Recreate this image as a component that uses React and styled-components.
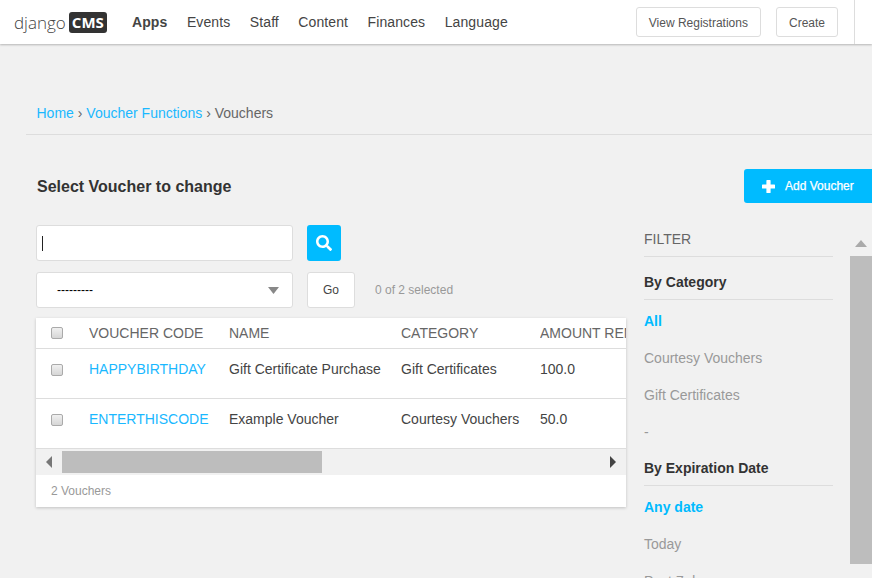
import React from 'react'
import styled, { createGlobalStyle } from 'styled-components'
import { FaSearch } from 'react-icons/fa'

const Global = createGlobalStyle`
  html, body {
    margin: 0;
    height: 100%;
    overflow: hidden;
    background: #f1f1f1;
  }
  body {
    font-family: "Liberation Sans", Arial, sans-serif;
    font-size: 14px;
    color: #333;
  }
  * { box-sizing: border-box; }
`

const Page = styled.div`
  width: 872px;
  height: 578px;
  overflow: hidden;
`

const TopBar = styled.header`
  height: 44px;
  background: #fff;
  box-shadow: 0 1px 2px rgba(0, 0, 0, 0.25);
  display: flex;
  align-items: center;
  padding-left: 14px;
  position: relative;
`

const Logo = styled.div`
  display: flex;
  align-items: center;
  width: 118px;
  font-family: "Open Sans", sans-serif;
  font-weight: 300;
  font-size: 17px;
  color: #444;
`

const LogoBox = styled.span`
  background: #333;
  color: #fff;
  border-radius: 3px;
  width: 38px;
  height: 21px;
  margin-left: 3px;
  display: flex;
  align-items: center;
  justify-content: center;
  font-family: "Open Sans", sans-serif;
  font-weight: 700;
  font-size: 15px;
`

const Nav = styled.nav`
  display: flex;
  gap: 19.5px;
  flex: 1;
`

const NavItem = styled.a`
  font-size: 14px;
  letter-spacing: 0.1px;
  color: #444;
  font-weight: ${p => (p.$active ? 700 : 400)};
`

const BarActions = styled.div`
  display: flex;
  gap: 15px;
  height: 44px;
  align-items: center;
  padding-right: 16px;
  border-right: 1px solid #ddd;
`

const BarButton = styled.button`
  height: 30px;
  padding: 1px 12px 0;
  background: #fff;
  border: 1px solid #ddd;
  border-radius: 3px;
  font: 12px "Liberation Sans", Arial, sans-serif;
  color: #555;
`

const Spacer = styled.div`
  width: 17px;
`

const Crumbs = styled.div`
  margin: 0 0 0 26px;
  padding: 61px 0 12px 10.5px;
  border-bottom: 1px solid #ddd;
  line-height: 17px;
  font-size: 14px;
  color: #666;
`

const Link = styled.a`
  color: #1ab8ff;
`

const TitleRow = styled.div`
  display: flex;
  justify-content: space-between;
  align-items: center;
  margin-top: 34px;
  padding-left: 37px;
  height: 34px;
`

const Title = styled.h1`
  margin: 2px 0 0;
  font-size: 16px;
  font-weight: 700;
  color: #333;
`

const AddButton = styled.button`
  width: 128px;
  height: 34px;
  background: #00bbff;
  border: 0;
  border-radius: 3px 0 0 3px;
  color: #fff;
  display: flex;
  align-items: center;
  gap: 10px;
  padding: 0 0 0 18px;
  font: 12px "Liberation Sans", Arial, sans-serif;
  -webkit-text-stroke: 0.25px #fff;
`

const Body = styled.div`
  display: flex;
  margin-top: 22px;
  padding-left: 36px;
`

const Main = styled.div`
  width: 590px;
  flex: none;
`

const ControlRow = styled.div`
  display: flex;
  align-items: center;
  margin-bottom: 11px;
`

const Field = styled.div`
  width: 257px;
  height: 36px;
  background: #fff;
  border: 1px solid #ddd;
  border-radius: 3px;
  display: flex;
  align-items: center;
  justify-content: ${p => (p.$select ? 'space-between' : 'flex-start')};
  padding: ${p => (p.$select ? '0 13px 0 20px' : '0 0 0 5px')};
  font-size: 12px;
  color: #000;
`

const Caret = styled.span`
  width: 1px;
  height: 15px;
  background: #222;
`

const SearchButton = styled.button`
  width: 34px;
  height: 36px;
  margin-left: 14px;
  background: #00bbff;
  border: 0;
  border-radius: 3px;
  color: #fff;
  display: flex;
  align-items: center;
  justify-content: center;
  padding: 0;
`

const GoButton = styled.button`
  width: 48px;
  height: 36px;
  margin-left: 14px;
  background: #fff;
  border: 1px solid #ddd;
  border-radius: 3px;
  font: 12px "Liberation Sans", Arial, sans-serif;
  color: #444;
`

const Counter = styled.span`
  margin-left: 20px;
  font-size: 12px;
  color: #999;
`

const Card = styled.div`
  margin-top: -1px;
  background: #fff;
  box-shadow: 0 1px 3px rgba(0, 0, 0, 0.2);
  overflow: hidden;
`

const Row = styled.div`
  display: grid;
  grid-template-columns: 53px 140px 172px 139px 86px;
  align-items: ${p => (p.$head ? 'center' : 'start')};
  height: ${p => (p.$head ? '31px' : '50px')};
  padding-top: ${p => (p.$head ? '0' : '12px')};
  border-bottom: 1px solid #ddd;
  font-size: 14px;
  line-height: 17px;
  color: ${p => (p.$head ? '#666' : '#444')};
`

const Cell = styled.div`
  overflow: hidden;
  white-space: nowrap;
`

const CheckCell = styled.div`
  padding-left: 15px;
  display: flex;
  align-items: center;
  height: 17px;
`

const Check = styled.input.attrs({ type: 'checkbox' })`
  appearance: none;
  width: 12px;
  height: 12px;
  margin: 0;
  border: 1px solid #aaa;
  border-radius: 2px;
  background: linear-gradient(#f0f0f0, #d6d6d6);
`

const HScroll = styled.div`
  height: 26px;
  background: #f1f1f1;
  display: flex;
  align-items: center;
  padding-left: 10px;
`

const Arrow = styled.svg`
  flex: none;
  display: block;
`

const HThumb = styled.div`
  width: 260px;
  height: 22px;
  background: #bdbdbd;
  margin: 0 288px 0 10px;
`

const CardFoot = styled.div`
  height: 32px;
  padding: 9px 15px 0;
  font-size: 12px;
  line-height: 14px;
  color: #999;
`

const Filter = styled.aside`
  width: 189px;
  margin-left: 18px;
  flex: none;
`

const FilterTitle = styled.div`
  height: 32px;
  padding-top: 6px;
  line-height: 17px;
  font-size: 14px;
  color: #666;
  border-bottom: 1px solid #ddd;
`

const FilterHead = styled.div`
  height: 43px;
  padding-top: 17px;
  line-height: 17px;
  font-size: 14px;
  font-weight: 700;
  color: #333;
  border-bottom: 1px solid #ddd;
`

const FilterItem = styled.div`
  height: ${p => (p.$last ? '32px' : '37px')};
  padding-top: 13px;
  line-height: 17px;
  font-size: 14px;
  font-weight: ${p => (p.$on ? 700 : 400)};
  color: ${p => (p.$on ? '#00bbff' : '#999')};
`

const VScroll = styled.div`
  width: 22px;
  margin-left: 17px;
  flex: none;
  display: flex;
  flex-direction: column;
  align-items: center;
`

const UpArrow = styled(Arrow)`
  margin-top: 15px;
`

const VThumb = styled.div`
  width: 22px;
  height: 308px;
  background: #bdbdbd;
  margin-top: 9px;
`

const rows = [
  ['HAPPYBIRTHDAY', 'Gift Certificate Purchase', 'Gift Certificates', '100.0'],
  ['ENTERTHISCODE', 'Example Voucher', 'Courtesy Vouchers', '50.0'],
]

export default function App() {
  return (
    <Page>
      <Global />
      <TopBar>
        <Logo>
          django<LogoBox>CMS</LogoBox>
        </Logo>
        <Nav>
          <NavItem $active>Apps</NavItem>
          <NavItem>Events</NavItem>
          <NavItem>Staff</NavItem>
          <NavItem>Content</NavItem>
          <NavItem>Finances</NavItem>
          <NavItem>Language</NavItem>
        </Nav>
        <BarActions>
          <BarButton>View Registrations</BarButton>
          <BarButton>Create</BarButton>
        </BarActions>
        <Spacer />
      </TopBar>

      <Crumbs>
        <Link>Home</Link> › <Link>Voucher Functions</Link> › Vouchers
      </Crumbs>

      <TitleRow>
        <Title>Select Voucher to change</Title>
        <AddButton>
          <Arrow width="13" height="13" viewBox="0 0 13 13">
            <path
              d="M5 0h3a.6.6 0 0 1 .6.6V4.4h3.8a.6.6 0 0 1 .6.6v3a.6.6 0 0 1-.6.6H8.6v3.8a.6.6 0 0 1-.6.6H5a.6.6 0 0 1-.6-.6V8.6H.6A.6.6 0 0 1 0 8V5a.6.6 0 0 1 .6-.6h3.8V.6A.6.6 0 0 1 5 0z"
              fill="#fff"
            />
          </Arrow>
          Add Voucher
        </AddButton>
      </TitleRow>

      <Body>
        <Main>
          <ControlRow>
            <Field>
              <Caret />
            </Field>
            <SearchButton>
              <FaSearch size={16} />
            </SearchButton>
          </ControlRow>
          <ControlRow>
            <Field $select>
              ---------
              <Arrow width="11" height="7" viewBox="0 0 11 7">
                <path d="M0 0h11L5.5 7z" fill="#888" />
              </Arrow>
            </Field>
            <GoButton>Go</GoButton>
            <Counter>0 of 2 selected</Counter>
          </ControlRow>
          <Card>
            <Row $head>
              <CheckCell>
                <Check />
              </CheckCell>
              <Cell>VOUCHER CODE</Cell>
              <Cell>NAME</Cell>
              <Cell>CATEGORY</Cell>
              <Cell>AMOUNT REMAINING</Cell>
            </Row>
            {rows.map(r => (
              <Row key={r[0]}>
                <CheckCell>
                  <Check />
                </CheckCell>
                <Link>{r[0]}</Link>
                <Cell>{r[1]}</Cell>
                <Cell>{r[2]}</Cell>
                <Cell>{r[3]}</Cell>
              </Row>
            ))}
            <HScroll>
              <Arrow width="6" height="12" viewBox="0 0 6 12">
                <path d="M6 0v12L0 6z" fill="#777" />
              </Arrow>
              <HThumb />
              <Arrow width="6" height="12" viewBox="0 0 6 12">
                <path d="M0 0v12l6-6z" fill="#444" />
              </Arrow>
            </HScroll>
            <CardFoot>2 Vouchers</CardFoot>
          </Card>
        </Main>

        <Filter>
          <FilterTitle>FILTER</FilterTitle>
          <FilterHead>By Category</FilterHead>
          <FilterItem $on>All</FilterItem>
          <FilterItem>Courtesy Vouchers</FilterItem>
          <FilterItem>Gift Certificates</FilterItem>
          <FilterItem $last>-</FilterItem>
          <FilterHead>By Expiration Date</FilterHead>
          <FilterItem $on>Any date</FilterItem>
          <FilterItem>Today</FilterItem>
          <FilterItem>Past 7 days</FilterItem>
        </Filter>

        <VScroll>
          <UpArrow width="12" height="7" viewBox="0 0 12 7">
            <path d="M0 7h12L6 0z" fill="#aaa" />
          </UpArrow>
          <VThumb />
        </VScroll>
      </Body>
    </Page>
  )
}
